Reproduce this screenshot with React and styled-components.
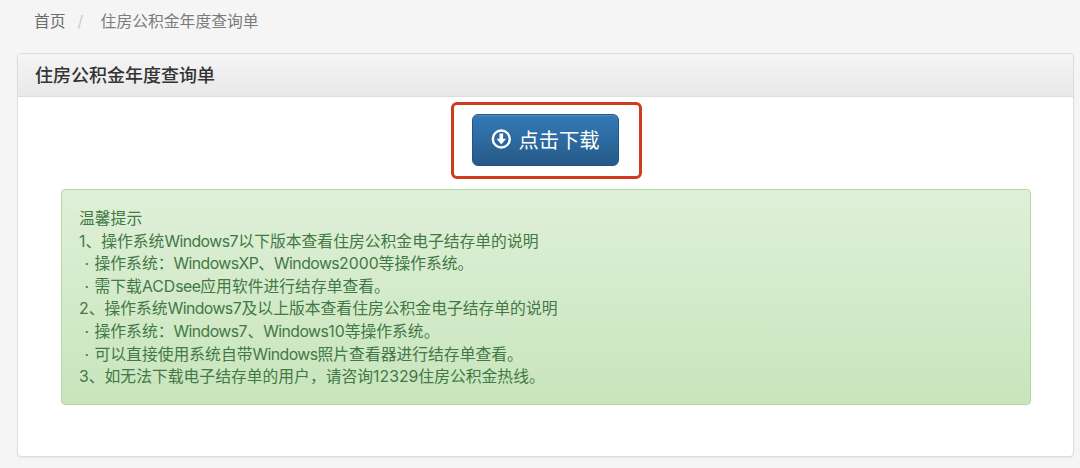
import React from 'react';
import styled, { createGlobalStyle } from 'styled-components';

const GlobalStyle = createGlobalStyle`
  * { box-sizing: border-box; }
  body {
    margin: 0;
    background: #f5f5f5;
    color: #333;
    font-family: Inter, "Noto Sans CJK SC", sans-serif;
    font-size: 15.8px;
  }
`;

const Page = styled.main`
  display: flex;
  flex-direction: column;
  height: 468px;
  padding: 0 6px 11px 17px;
  overflow: hidden;
`;

const Breadcrumb = styled.nav`
  display: flex;
  align-items: center;
  height: 53px;
  padding: 0 17px 10px;
  line-height: 22px;
  color: #777;
`;

const Crumb = styled.span`
  color: ${(p) => (p.$active ? '#7c7c7c' : '#6c6c6c')};
`;

const Separator = styled.span`
  width: 35px;
  padding-left: 12px;
  color: #ccc;
`;

const Panel = styled.section`
  display: flex;
  flex-direction: column;
  flex: 1;
  background: #fff;
  border: 1px solid #ddd;
  border-radius: 4px;
  box-shadow: 0 1px 2px rgba(0, 0, 0, 0.06);
`;

const PanelHeading = styled.h1`
  height: 43px;
  margin: 0;
  padding: 0 17px;
  border-bottom: 1px solid #ddd;
  border-radius: 3px 3px 0 0;
  background: linear-gradient(#f5f5f5, #e8e8e8);
  font-size: 18px;
  font-weight: 500;
  line-height: 43px;
`;

const PanelBody = styled.div`
  display: flex;
  flex-direction: column;
  padding: 5px 42px 0 43px;
`;

const Highlight = styled.div`
  align-self: center;
  width: 191px;
  height: 77px;
  padding: 9px 18px;
  border: 3px solid #d03a20;
  border-radius: 6px;
`;

const DownloadButton = styled.button`
  display: flex;
  align-items: center;
  justify-content: center;
  gap: 7px;
  width: 147px;
  height: 52px;
  margin: 0;
  padding: 0 0 0 1px;
  border: 1px solid #245580;
  border-radius: 6px;
  background: linear-gradient(#337ab7, #265a88);
  box-shadow: inset 0 1px 0 rgba(255, 255, 255, 0.15);
  color: #fff;
  font-family: inherit;
  font-size: 20.3px;
  line-height: 28px;
`;

const ButtonIcon = styled.svg`
  width: 20px;
  height: 20px;
  margin-bottom: 2px;
`;

const ButtonLabel = styled.span`
  padding-top: 2px;
`;

const Notice = styled.div`
  height: 216px;
  margin-top: 10px;
  padding: 18px 17px 16px;
  border: 1px solid #b2dba1;
  border-radius: 4px;
  background: linear-gradient(#dff0d8, #c8e5bc);
  color: #427845;
`;

const Line = styled.p`
  margin: 0;
  line-height: 22.6px;
  white-space: nowrap;
`;

const Bullet = styled.span`
  display: inline-block;
  width: 15.5px;
  text-align: center;
`;

const Latin = styled.span`
  letter-spacing: -0.55px;
`;

const lines = [
  { text: '温馨提示' },
  { text: '1、操作系统Windows7以下版本查看住房公积金电子结存单的说明' },
  { text: '操作系统：WindowsXP、Windows2000等操作系统。', bullet: true },
  { text: '需下载ACDsee应用软件进行结存单查看。', bullet: true },
  { text: '2、操作系统Windows7及以上版本查看住房公积金电子结存单的说明' },
  { text: '操作系统：Windows7、Windows10等操作系统。', bullet: true },
  { text: '可以直接使用系统自带Windows照片查看器进行结存单查看。', bullet: true },
  { text: '3、如无法下载电子结存单的用户，请咨询12329住房公积金热线。' },
];

function DownloadIcon() {
  return (
    <ButtonIcon viewBox="0 0 20 20" aria-hidden="true">
      <circle cx="10.3" cy="10" r="8.5" fill="none" stroke="#fff" strokeWidth="2.4" />
      <path d="M8.5 4.6h3.6v5.2h2.9l-4.7 5.6-4.7-5.6h2.9z" fill="#fff" />
    </ButtonIcon>
  );
}

function LineText({ text }) {
  return text
    .split(/(Windows(?:XP)?|see)/)
    .map((part, i) => (i % 2 ? <Latin key={i}>{part}</Latin> : part));
}

export default function App() {
  return (
    <>
      <GlobalStyle />
      <Page>
        <Breadcrumb>
          <Crumb>首页</Crumb>
          <Separator>/</Separator>
          <Crumb $active>住房公积金年度查询单</Crumb>
        </Breadcrumb>
        <Panel>
          <PanelHeading>住房公积金年度查询单</PanelHeading>
          <PanelBody>
            <Highlight>
              <DownloadButton type="button">
                <DownloadIcon />
                <ButtonLabel>点击下载</ButtonLabel>
              </DownloadButton>
            </Highlight>
            <Notice>
              {lines.map((line) => (
                <Line key={line.text}>
                  {line.bullet && <Bullet>·</Bullet>}
                  <LineText text={line.text} />
                </Line>
              ))}
            </Notice>
          </PanelBody>
        </Panel>
      </Page>
    </>
  );
}
